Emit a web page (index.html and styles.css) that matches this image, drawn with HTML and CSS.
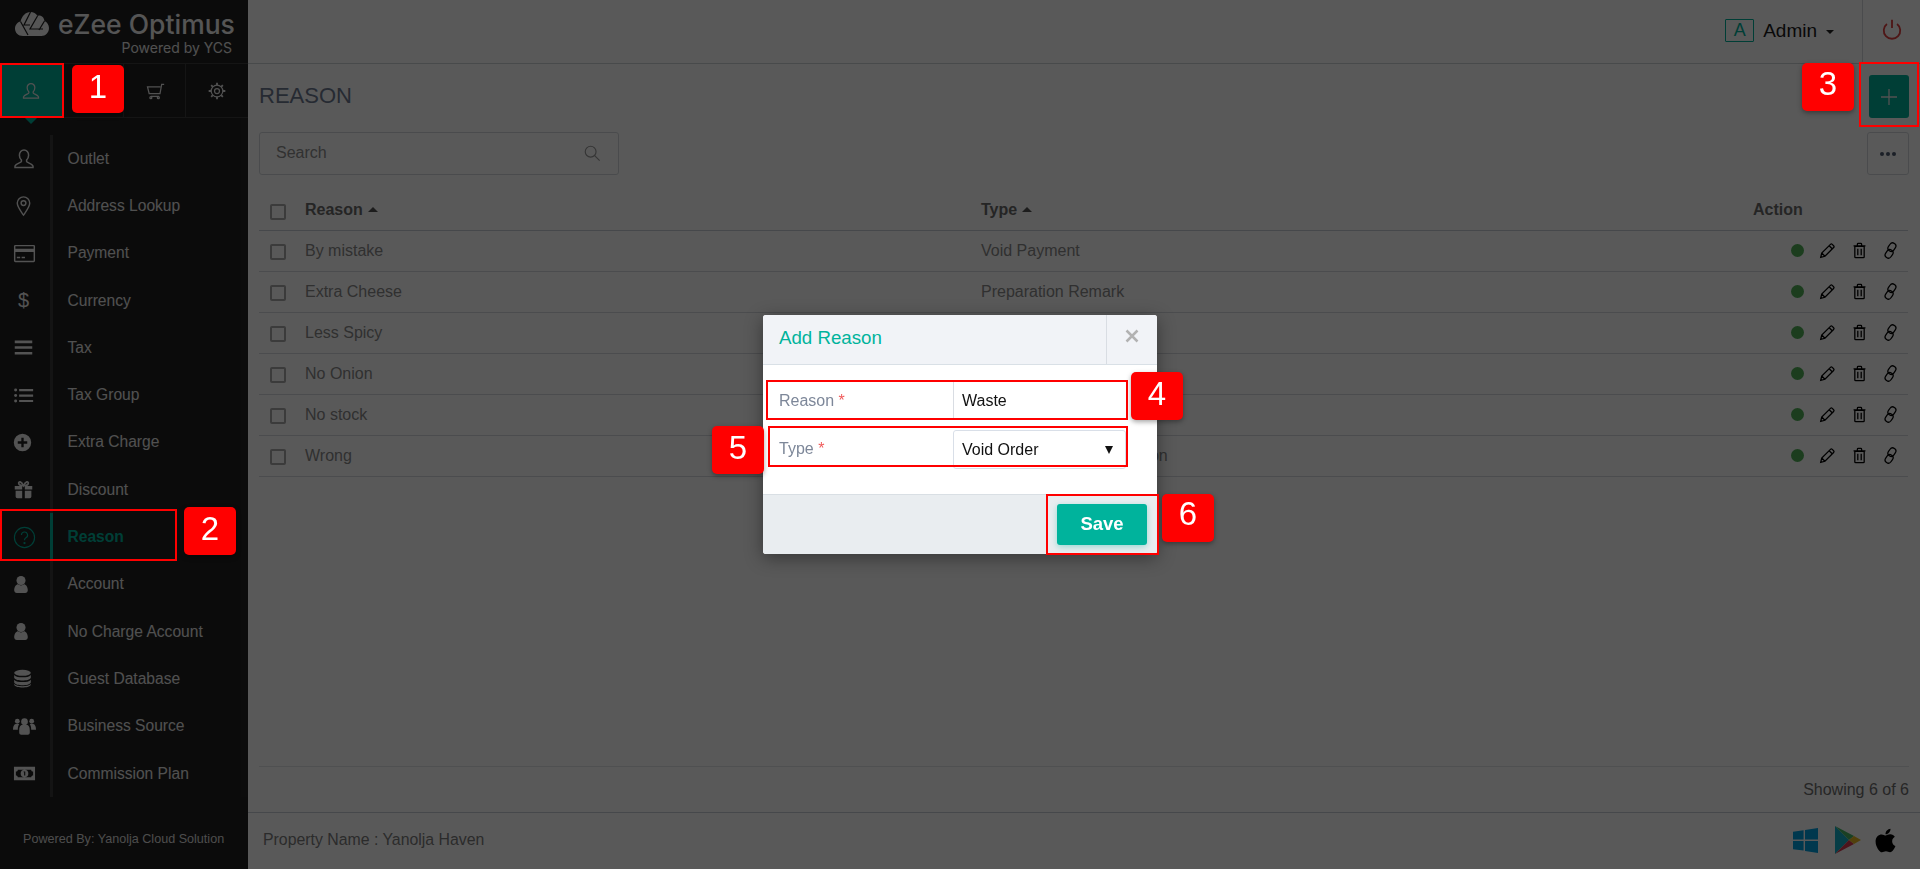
FILE: index.html
```html
<!DOCTYPE html>
<html lang="en">
<head>
<meta charset="utf-8">
<title>Reason</title>
<link rel="stylesheet" href="styles.css">
</head>
<body>
<div class="app">
  <aside class="sidebar">
    <div class="brand">
      <svg class="brand-mark" viewBox="0 0 34 25"><path d="M8 25C3 25 0 21.500 0 17.500C0 14 2.500 11 5.500 10.500C7 5 10.500 1 15.500 1C18.500 1 21 2.500 22.500 5C23.500 4.500 24.500 4.500 25 4.500C27.500 5 29 7 29.500 10C32 11 34 13.800 34 17C34 21.500 30.500 25 26.500 25Z"/><path class="brand-cut" d="M5.500 10.500L13 24M15.500 1L9 14L15 14M22.500 5L15 18H28M29.500 10L24 19"/></svg>
      <div class="brand-text">
        <div class="brand-name">eZee Optimus</div>
        <div class="brand-sub">Powered by YCS</div>
      </div>
    </div>
    <div class="tabs">
      <div class="tab tab-active"><svg class="ico-tab" viewBox="0 0 24 24"><path class="ln" d="M12 3a4.600 5 0 0 1 4.600 5.200c0 2-1 3.800-2 4.800v1.500c0 1 5.600 2 6.400 4.500v1.500H3V19c.8-2.500 6.400-3.500 6.400-4.500V13c-1-1-2-2.800-2-4.800A4.600 5 0 0 1 12 3z"/></svg></div>
      <div class="tab"></div>
      <div class="tab"><svg class="ico-tab" viewBox="0 0 24 24"><path class="ln" d="M23 4h-3l-2 11H5L3 7h15.500M7 18.500h10"/><circle class="ln" cx="7" cy="20" r="1.200"/><circle class="ln" cx="16" cy="20" r="1.200"/></svg></div>
      <div class="tab"><svg class="ico-tab" viewBox="0 0 24 24"><circle class="ln" cx="12" cy="12" r="7"/><circle class="ln" cx="12" cy="12" r="3"/><path class="ln ln-teeth" d="M12 2v3M12 19v3M2 12h3M19 12h3M5 5l2 2M17 17l2 2M19 5l-2 2M7 17l-2 2"/></svg></div>
    </div>
    <nav class="nav">
      <a class="nav-item"><span class="nav-ico ico-lg"><svg viewBox="0 0 24 24"><path class="ln" d="M12 3a4.600 5 0 0 1 4.600 5.200c0 2-1 3.800-2 4.800v1.500c0 1 5.600 2 6.400 4.500v1.500H3V19c.8-2.500 6.400-3.500 6.400-4.500V13c-1-1-2-2.800-2-4.800A4.600 5 0 0 1 12 3z"/></svg></span><span class="nav-label">Outlet</span></a>
      <a class="nav-item"><span class="nav-ico ico-pin"><svg viewBox="0 0 24 24"><path class="ln" d="M12 22C8.500 17 5.500 13.500 5.500 9.500a6.500 6.500 0 0 1 13 0C18.500 13.500 15.500 17 12 22z"/><circle class="ln" cx="12" cy="9.500" r="2.500"/></svg></span><span class="nav-label">Address Lookup</span></a>
      <a class="nav-item"><span class="nav-ico ico-wide"><svg viewBox="0 0 24 24"><path class="sd" fill-rule="evenodd" d="M2.500 3h19A1.500 1.500 0 0 1 23 4.500v15a1.500 1.500 0 0 1-1.500 1.500h-19A1.500 1.500 0 0 1 1 19.500v-15A1.500 1.500 0 0 1 2.500 3zM2.500 4.500V7h19V4.500zM2.500 10.500v9h19v-9zM4 15.500h3.500V17H4zM9 15.500h3.500V17H9z"/></svg></span><span class="nav-label">Payment</span></a>
      <a class="nav-item"><span class="nav-ico nav-glyph">$</span><span class="nav-label">Currency</span></a>
      <a class="nav-item"><span class="nav-ico ico-md"><svg viewBox="0 0 24 24"><path class="sd" d="M2 4h20v3H2zM2 10.500h20v3H2zM2 17h20v3H2z"/></svg></span><span class="nav-label">Tax</span></a>
      <a class="nav-item"><span class="nav-ico ico-md"><svg viewBox="0 0 24 24"><path class="sd" d="M7 4.500h16v2.500H7zM7 10.800h16v2.500H7zM7 17h16v2.500H7z"/><circle class="sd" cx="3" cy="5.700" r="1.700"/><circle class="sd" cx="3" cy="12" r="1.700"/><circle class="sd" cx="3" cy="18.300" r="1.700"/></svg></span><span class="nav-label">Tax Group</span></a>
      <a class="nav-item"><span class="nav-ico"><svg viewBox="0 0 24 24"><path class="sd" fill-rule="evenodd" d="M12 1a11 11 0 1 1 0 22a11 11 0 0 1 0-22zM10.500 6v4.500H6v3h4.500V18h3v-4.500H18v-3h-4.500V6z"/></svg></span><span class="nav-label">Extra Charge</span></a>
      <a class="nav-item"><span class="nav-ico ico-md"><svg viewBox="0 0 24 24"><path class="sd" d="M2 8h8.500v4H2zM13.500 8H22v4h-8.500zM3 13.500h7.500V22H5a2 2 0 0 1-2-2zM13.500 13.500H21V20a2 2 0 0 1-2 2h-5.500z"/><path class="ln ln-bold" d="M12 7.500C9 7.500 6.500 6.500 6.500 4.500C6.500 3 9 2 12 7.500C15 2 17.500 3 17.500 4.500C17.500 6.500 15 7.500 12 7.500z"/></svg></span><span class="nav-label">Discount</span></a>
      <a class="nav-item nav-item-active"><span class="nav-ico ico-help"><svg viewBox="0 0 24 24"><circle class="ln-teal" cx="12" cy="12" r="10.500"/><path class="ln-teal ln-bold" d="M8.800 9.500a3.200 3.200 0 1 1 4.700 2.800c-1 .6-1.500 1.200-1.500 2.500"/><circle class="sd-teal" cx="12" cy="17.800" r="1.200"/></svg></span><span class="nav-label">Reason</span></a>
      <a class="nav-item"><span class="nav-ico ico-slim"><svg viewBox="3 1 18 22.500"><circle class="sd" cx="12" cy="7" r="6"/><path class="sd" d="M3 20c0-5 3-8 5-8c1 1 2.500 1.500 4 1.500s3-.5 4-1.500c2 0 5 3 5 8c0 2-1.500 3.500-3.500 3.500h-11C4.500 23.500 3 22 3 20z"/></svg></span><span class="nav-label">Account</span></a>
      <a class="nav-item"><span class="nav-ico ico-slim"><svg viewBox="3 1 18 22.500"><circle class="sd" cx="12" cy="7" r="6"/><path class="sd" d="M3 20c0-5 3-8 5-8c1 1 2.500 1.500 4 1.500s3-.5 4-1.500c2 0 5 3 5 8c0 2-1.500 3.500-3.500 3.500h-11C4.500 23.500 3 22 3 20z"/></svg></span><span class="nav-label">No Charge Account</span></a>
      <a class="nav-item"><span class="nav-ico"><svg viewBox="0 0 24 24"><ellipse class="sd" cx="12" cy="4.800" rx="10.500" ry="3.800"/><path class="sd" d="M1.500 7.500c2 2.500 6 3 10.500 3s8.500-.5 10.500-3V11c-1 2.500-6 3.500-10.500 3.500S2.500 13.500 1.500 11zM1.500 13.500c2 2.500 6 3 10.500 3s8.500-.5 10.500-3V17c-1 2.500-6 3.500-10.500 3.500S2.500 19.500 1.500 17zM1.500 19c2 2 6 2.700 10.500 2.700s8.500-.7 10.500-2.700v1c-1 2.500-6 3.500-10.500 3.500S2.500 22.500 1.500 20z"/></svg></span><span class="nav-label">Guest Database</span></a>
      <a class="nav-item"><span class="nav-ico ico-wide"><svg viewBox="0 0 24 24"><circle class="sd" cx="12" cy="7" r="3.500"/><circle class="sd" cx="4.500" cy="6.500" r="2.500"/><circle class="sd" cx="19.500" cy="6.500" r="2.500"/><path class="sd" d="M0 15c0-3.500 1.500-5.500 3-5.500h3.500c-.8 1-1.500 3-1.500 6H1.500C.5 15.500 0 15.500 0 15zM24 15c0-3.500-1.500-5.500-3-5.500h-3.500c.8 1 1.500 3 1.500 6h3.500c1 0 1.500 0 1.500-.5zM6.500 16c0-4 1.500-5.500 3-5.500h5c1.500 0 3 1.500 3 5.500v2.500c0 1.200-1 2-2 2h-7c-1 0-2-.8-2-2z"/></svg></span><span class="nav-label">Business Source</span></a>
      <a class="nav-item"><span class="nav-ico ico-wide"><svg viewBox="0 0 24 24"><path class="sd" fill-rule="evenodd" d="M1 5h22v14H1zM5 8c0 1.500-1 2-2 2v4c1 0 2 .5 2 2h14c0-1.500 1-2 2-2v-4c-1 0-2-.5-2-2zM12 8a4 4 0 1 1 0 8a4 4 0 0 1 0-8zM11 10v.8h.6V14h1.200V9.800h-.8z"/></svg></span><span class="nav-label">Commission Plan</span></a>
    </nav>
    <div class="side-foot">Powered By: Yanolja Cloud Solution</div>
  </aside>

  <main class="main">
    <header class="topbar">
      <div class="user"><span class="avatar">A</span><span class="user-name">Admin</span><span class="caret"></span></div>
      <div class="power"><svg viewBox="0 0 24 24"><path class="ln-power" d="M6.500 6.500a9 9 0 1 0 11 0M12 2v9"/></svg></div>
    </header>
    <div class="title-row">
      <h1 class="page-title">REASON</h1>
      <button class="add-btn" type="button"><svg viewBox="0 0 20 20"><path class="ln-plus" d="M10 2v16M2 10h16"/></svg></button>
    </div>
    <div class="tools-row">
      <div class="search"><span class="search-ph">Search</span><svg viewBox="0 0 20 20"><circle class="ln-search" cx="8.500" cy="8.500" r="6"/><path class="ln-search" d="M13 13l5.500 5.500"/></svg></div>
      <button class="more-btn" type="button"><i></i><i></i><i></i></button>
    </div>
    <table class="grid">
      <thead>
        <tr><th class="c-check"><span class="check"></span></th><th class="c-reason">Reason<span class="sort"></span></th><th class="c-type">Type<span class="sort"></span></th><th class="c-action">Action</th></tr>
      </thead>
      <tbody>
        <tr><td class="c-check"><span class="check"></span></td><td>By mistake</td><td>Void Payment</td><td><div class="acts"><span class="dot"></span><svg viewBox="0 0 20 20"><path class="ln-act" d="M2 18l1.200-5L13.500 2.800a1.500 1.500 0 0 1 2.100 0l1.600 1.600a1.500 1.500 0 0 1 0 2.100L7 16.800zM3.200 13l3.800 3.800M12 4.500l3.500 3.500"/></svg><svg viewBox="0 0 20 20"><path class="ln-act" d="M4.500 5h11v12.500a1 1 0 0 1-1 1h-9a1 1 0 0 1-1-1zM3 4.500h14M7.500 4V2.500a1 1 0 0 1 1-1h3a1 1 0 0 1 1 1V4M8 8v7.500M12 8v7.500"/></svg><svg viewBox="0 0 20 20"><rect class="ln-act" x="8" y="1" width="7.500" height="10.500" rx="3.700" transform="rotate(35 12 6)"/><rect class="ln-act" x="4.500" y="8.500" width="7.500" height="10.500" rx="3.700" transform="rotate(35 8 14)"/></svg></div></td></tr>
        <tr><td class="c-check"><span class="check"></span></td><td>Extra Cheese</td><td>Preparation Remark</td><td><div class="acts"><span class="dot"></span><svg viewBox="0 0 20 20"><path class="ln-act" d="M2 18l1.200-5L13.500 2.800a1.500 1.500 0 0 1 2.100 0l1.600 1.600a1.500 1.500 0 0 1 0 2.100L7 16.800zM3.200 13l3.800 3.800M12 4.500l3.500 3.500"/></svg><svg viewBox="0 0 20 20"><path class="ln-act" d="M4.500 5h11v12.500a1 1 0 0 1-1 1h-9a1 1 0 0 1-1-1zM3 4.500h14M7.500 4V2.500a1 1 0 0 1 1-1h3a1 1 0 0 1 1 1V4M8 8v7.500M12 8v7.500"/></svg><svg viewBox="0 0 20 20"><rect class="ln-act" x="8" y="1" width="7.500" height="10.500" rx="3.700" transform="rotate(35 12 6)"/><rect class="ln-act" x="4.500" y="8.500" width="7.500" height="10.500" rx="3.700" transform="rotate(35 8 14)"/></svg></div></td></tr>
        <tr><td class="c-check"><span class="check"></span></td><td>Less Spicy</td><td>Preparation Remark</td><td><div class="acts"><span class="dot"></span><svg viewBox="0 0 20 20"><path class="ln-act" d="M2 18l1.200-5L13.500 2.800a1.500 1.500 0 0 1 2.100 0l1.600 1.600a1.500 1.500 0 0 1 0 2.100L7 16.800zM3.200 13l3.800 3.800M12 4.500l3.500 3.500"/></svg><svg viewBox="0 0 20 20"><path class="ln-act" d="M4.500 5h11v12.500a1 1 0 0 1-1 1h-9a1 1 0 0 1-1-1zM3 4.500h14M7.500 4V2.500a1 1 0 0 1 1-1h3a1 1 0 0 1 1 1V4M8 8v7.500M12 8v7.500"/></svg><svg viewBox="0 0 20 20"><rect class="ln-act" x="8" y="1" width="7.500" height="10.500" rx="3.700" transform="rotate(35 12 6)"/><rect class="ln-act" x="4.500" y="8.500" width="7.500" height="10.500" rx="3.700" transform="rotate(35 8 14)"/></svg></div></td></tr>
        <tr><td class="c-check"><span class="check"></span></td><td>No Onion</td><td>Preparation Remark</td><td><div class="acts"><span class="dot"></span><svg viewBox="0 0 20 20"><path class="ln-act" d="M2 18l1.200-5L13.500 2.800a1.500 1.500 0 0 1 2.100 0l1.600 1.600a1.500 1.500 0 0 1 0 2.100L7 16.800zM3.200 13l3.800 3.800M12 4.500l3.500 3.500"/></svg><svg viewBox="0 0 20 20"><path class="ln-act" d="M4.500 5h11v12.500a1 1 0 0 1-1 1h-9a1 1 0 0 1-1-1zM3 4.500h14M7.500 4V2.500a1 1 0 0 1 1-1h3a1 1 0 0 1 1 1V4M8 8v7.500M12 8v7.500"/></svg><svg viewBox="0 0 20 20"><rect class="ln-act" x="8" y="1" width="7.500" height="10.500" rx="3.700" transform="rotate(35 12 6)"/><rect class="ln-act" x="4.500" y="8.500" width="7.500" height="10.500" rx="3.700" transform="rotate(35 8 14)"/></svg></div></td></tr>
        <tr><td class="c-check"><span class="check"></span></td><td>No stock</td><td>Void Order</td><td><div class="acts"><span class="dot"></span><svg viewBox="0 0 20 20"><path class="ln-act" d="M2 18l1.200-5L13.500 2.800a1.500 1.500 0 0 1 2.100 0l1.600 1.600a1.500 1.500 0 0 1 0 2.100L7 16.800zM3.200 13l3.800 3.800M12 4.500l3.500 3.500"/></svg><svg viewBox="0 0 20 20"><path class="ln-act" d="M4.500 5h11v12.500a1 1 0 0 1-1 1h-9a1 1 0 0 1-1-1zM3 4.500h14M7.500 4V2.500a1 1 0 0 1 1-1h3a1 1 0 0 1 1 1V4M8 8v7.500M12 8v7.500"/></svg><svg viewBox="0 0 20 20"><rect class="ln-act" x="8" y="1" width="7.500" height="10.500" rx="3.700" transform="rotate(35 12 6)"/><rect class="ln-act" x="4.500" y="8.500" width="7.500" height="10.500" rx="3.700" transform="rotate(35 8 14)"/></svg></div></td></tr>
        <tr><td class="c-check"><span class="check"></span></td><td>Wrong</td><td>Complimentary Remission</td><td><div class="acts"><span class="dot"></span><svg viewBox="0 0 20 20"><path class="ln-act" d="M2 18l1.200-5L13.500 2.800a1.500 1.500 0 0 1 2.100 0l1.600 1.600a1.500 1.500 0 0 1 0 2.100L7 16.800zM3.200 13l3.800 3.800M12 4.500l3.500 3.500"/></svg><svg viewBox="0 0 20 20"><path class="ln-act" d="M4.500 5h11v12.500a1 1 0 0 1-1 1h-9a1 1 0 0 1-1-1zM3 4.500h14M7.500 4V2.500a1 1 0 0 1 1-1h3a1 1 0 0 1 1 1V4M8 8v7.500M12 8v7.500"/></svg><svg viewBox="0 0 20 20"><rect class="ln-act" x="8" y="1" width="7.500" height="10.500" rx="3.700" transform="rotate(35 12 6)"/><rect class="ln-act" x="4.500" y="8.500" width="7.500" height="10.500" rx="3.700" transform="rotate(35 8 14)"/></svg></div></td></tr>
      </tbody>
    </table>
    <div class="grid-foot">Showing 6 of 6</div>
    <footer class="page-foot">
      <span class="property">Property Name : Yanolja Haven</span>
      <div class="stores">
        <svg class="store-win" viewBox="0 0 26 26"><path class="win" d="M0 4l11-1.600V12H0zM12.500 2.200L26 0v12H12.500zM0 13.500h11v10L0 22zM12.500 13.500H26V26l-13.500-2z"/></svg>
        <svg class="store-play" viewBox="0 0 26 28"><path class="play-a" d="M0 0L14 14L0 28z"/><path class="play-b" d="M0 0L19 10L14 14z"/><path class="play-c" d="M0 28L19 18L14 14z"/><path class="play-d" d="M19 10L26 14L19 18L14 14z"/></svg>
        <svg class="store-apple" viewBox="0 0 384 512"><path d="M318.700 268.700c-.2-36.700 16.400-64.400 50-84.800-18.800-26.900-47.200-41.700-84.700-44.600-35.500-2.800-74.300 20.700-88.500 20.700-15 0-49.400-19.700-76.400-19.700C63.300 141.200 4 184.800 4 273.500q0 39.300 14.400 81.200c12.800 36.700 59 126.700 107.200 125.200 25.200-.6 43-17.900 75.800-17.900 31.800 0 48.300 17.900 76.400 17.900 48.600-.7 90.400-82.500 102.600-119.300-65.200-30.700-61.700-90-61.700-91.900zm-56.600-164.200c27.300-32.400 24.800-61.900 24-72.500-24.100 1.400-52 16.400-67.900 34.900-17.500 19.800-27.800 44.300-25.600 71.900 26.100 2 49.900-11.400 69.500-34.300z"/></svg>
      </div>
    </footer>
  </main>
</div>

<div class="backdrop"></div>

<section class="modal">
  <div class="modal-head">
    <h2 class="modal-title">Add Reason</h2>
    <div class="modal-close"><svg viewBox="0 0 14 14"><path class="ln-close" d="M1.500 1.500l11 11M12.500 1.500l-11 11"/></svg></div>
  </div>
  <div class="modal-body">
    <div class="field"><label class="field-label">Reason <span class="req">*</span></label><input class="field-input" type="text" value="Waste"></div>
    <div class="field field-select"><label class="field-label field-label-up">Type <span class="req">*</span></label><div class="select">Void Order<span class="select-arrow"></span></div></div>
  </div>
  <div class="modal-foot"><button class="save-btn" type="button">Save</button></div>
</section>

<div class="mark mark-1"></div>
<div class="mark mark-2"></div>
<div class="mark mark-3"></div>
<div class="mark mark-4"></div>
<div class="mark mark-5"></div>
<div class="mark mark-6"></div>
<div class="badge badge-1">1</div>
<div class="badge badge-2">2</div>
<div class="badge badge-3">3</div>
<div class="badge badge-4">4</div>
<div class="badge badge-5">5</div>
<div class="badge badge-6">6</div>
</body>
</html>
```

FILE: styles.css
```css
* { box-sizing: border-box; }
html, body { margin: 0; height: 100%; overflow: hidden; }
body { font-family: "Liberation Sans", Arial, sans-serif; font-size: 16px; color: #7c7c7c; background: #fff; }

.app { display: flex; width: 1920px; height: 869px; }

/* sidebar */
.sidebar { width: 248px; flex: none; display: flex; flex-direction: column; background: #202020; color: #e8e8e8; }
.brand { height: 64px; flex: none; display: flex; gap: 9px; padding: 9px 16px 0 15px; border-bottom: 1px solid #3d3d3d; }
.brand-mark { width: 34px; height: 25px; flex: none; margin-top: 2px; fill: #f2f2f2; }
.brand-cut { fill: none; stroke: #202020; stroke-width: 1.200; }
.brand-text { flex: 1; min-width: 0; text-align: right; }
.brand-name { font-family: Inter, sans-serif; font-size: 26.500px; font-weight: 500; line-height: 30px; color: #f2f2f2; white-space: nowrap; }
.brand-sub { font-family: Inter, sans-serif; font-size: 14px; line-height: 17px; color: #e6e6e6; white-space: nowrap; }

.tabs { height: 54px; flex: none; display: flex; border-bottom: 1px solid #3d3d3d; }
.tab { width: 62px; display: flex; align-items: center; justify-content: center; border-right: 1px solid #3d3d3d; position: relative; }
.tab:last-child { border-right: 0; }
.tab-active { background: #00b39c; border-right: 0; }
.tab-active::after { content: ""; position: absolute; left: 24px; top: 100%; border: 7px solid transparent; border-top-color: #00b39c; border-bottom: 0; }
.ico-tab { width: 20px; height: 20px; }
.ln { fill: none; stroke: #e8e8e8; stroke-width: 1.500; }
.ln-bold { stroke-width: 2; }
.ln-teeth { stroke-width: 2.200; }
.sd { fill: #eeeeee; }

.nav { flex: 1; padding-top: 17px; border-right: 7px solid #242424; }
.nav-item { display: flex; height: 47.300px; align-items: center; }
.nav-ico { width: 50px; height: 100%; flex: none; display: flex; align-items: center; padding-left: 13px; }
.nav-ico svg { width: 19px; height: 19px; }
.ico-md svg { width: 21px; height: 21px; }
.ico-lg { padding-left: 12px; }
.ico-lg svg { width: 24px; height: 24px; }
.ico-pin { padding-left: 12px; }
.ico-pin svg { width: 23px; height: 23px; }
.ico-wide svg { width: 23px; height: 23px; }
.ico-slim { padding-left: 14px; }
.ico-slim svg { width: 14px; height: 17px; }
.ico-help svg { width: 23px; height: 23px; }
.nav-glyph { font-size: 20px; padding-left: 18px; color: #eeeeee; }
.nav-label { flex: 1; height: 100%; display: flex; align-items: center; padding-left: 14.500px; border-left: 3px solid #3a3a3a; font-size: 15.600px; color: #e6e6e6; }
.nav-item-active .nav-label { color: #00b39c; font-weight: 700; border-left-color: #00b39c; }
.ln-teal { fill: none; stroke: #00b39c; stroke-width: 1.200; }
.sd-teal { fill: #00b39c; }

.side-foot { height: 72px; flex: none; display: flex; align-items: center; padding: 12px 0 0 23px; font-size: 12.600px; color: #dcdcdc; white-space: nowrap; }

/* main */
.main { flex: 1; min-width: 0; display: flex; flex-direction: column; background: #fff; }
.topbar { height: 64px; flex: none; display: flex; justify-content: flex-end; border-bottom: 1px solid #cfd3d8; }
.user { display: flex; align-items: center; padding: 0 28px 2px 0; }
.avatar { width: 29px; height: 23px; display: flex; align-items: center; justify-content: center; border: 1px solid #00b39c; border-radius: 1px; color: #00b39c; font-size: 18px; margin-right: 9px; }
.user-name { font-size: 19px; color: #1a1a1a; }
.caret { margin-left: 9px; margin-top: 2px; border: 4.500px solid transparent; border-top-color: #222; border-bottom: 0; }
.power { width: 58px; display: flex; align-items: center; justify-content: center; border-left: 1px solid #d5d8dc; padding-bottom: 6px; }
.power svg { width: 22px; height: 22px; }
.ln-power { fill: none; stroke: #e04040; stroke-width: 2; }

.title-row { height: 68px; flex: none; display: flex; align-items: center; justify-content: space-between; padding: 0 11px; }
.page-title { margin: 0; font-size: 22px; font-weight: 400; color: #6d7a91; padding-bottom: 4px; }
.add-btn { width: 40px; height: 43px; border: 0; border-radius: 3px; background: #00b39c; display: flex; align-items: center; justify-content: center; padding: 0; align-self: flex-start; margin-top: 11px; }
.add-btn svg { width: 20px; height: 20px; }
.ln-plus { fill: none; stroke: #e8e8e8; stroke-width: 1.300; }

.tools-row { height: 43px; flex: none; display: flex; justify-content: space-between; padding: 0 11px; }
.search { width: 360px; height: 43px; display: flex; align-items: center; justify-content: space-between; padding: 0 17px 2px 16px; border: 1px solid #d5d8dc; border-radius: 3px; }
.search svg { width: 18px; height: 18px; }
.ln-search { fill: none; stroke: #9a9a9a; stroke-width: 1.300; }
.search-ph { color: #8d8d8d; }
.more-btn { width: 42px; height: 43px; border: 1px solid #d5d8dc; border-radius: 3px; background: #fff; display: flex; align-items: center; justify-content: center; gap: 2px; padding: 0; }
.more-btn i { width: 4px; height: 4px; border-radius: 50%; background: #4d5a70; }

.grid { width: 1649px; margin: 14px 0 0 11px; border-collapse: collapse; table-layout: fixed; }
.grid th { height: 41px; padding: 2px 0 0; font-weight: 700; text-align: left; color: #6a6a6a; border-bottom: 1px solid #c9ced6; }
.grid td { height: 41px; padding: 0; border-bottom: 1px solid #d8dbdf; color: #8a8a8a; white-space: nowrap; }
.c-check { width: 46px; padding-left: 11px !important; }
.c-reason { width: 676px; }
.c-type { width: 772px; }
.check { display: block; width: 16px; height: 16px; border: 2px solid #a8a8a8; border-radius: 2px; margin-top: 3px; }
.sort { display: inline-block; margin-left: 5px; vertical-align: 3px; border: 5px solid transparent; border-bottom-color: #555; border-top: 0; }
.acts { display: flex; justify-content: flex-end; align-items: center; gap: 14.500px; padding-right: 9px; }
.acts svg { width: 17px; height: 17px; }
.dot { width: 13px; height: 13px; border-radius: 50%; background: #50b058; margin-right: 1px; }
.ln-act { fill: none; stroke: #000; stroke-width: 1.500; }

.grid-foot { margin: auto 11px 0; height: 46px; flex: none; display: flex; align-items: center; justify-content: flex-end; border-top: 1px solid #e2e4e7; color: #6e6e6e; }
.page-foot { height: 57px; flex: none; display: flex; align-items: center; justify-content: space-between; padding: 0 24px 2px 15px; border-top: 1px solid #c9ced6; }
.property { font-size: 15.850px; color: #7c7c7c; }
.stores { display: flex; align-items: center; }
.store-win { width: 25px; height: 25px; margin-right: 17px; }
.win { fill: #00a0e0; }
.store-play { width: 26px; height: 28px; margin-right: 14px; }
.play-a { fill: #12b0c8; }
.play-b { fill: #48b866; }
.play-c { fill: #d93a50; }
.play-d { fill: #e8b820; }
.store-apple { width: 21px; height: 27px; fill: #000; }

/* overlay layer */
.backdrop { position: fixed; inset: 0; background: rgba(0, 0, 0, .65); }

.modal { position: absolute; left: 763px; top: 315px; width: 394px; height: 239px; display: flex; flex-direction: column; background: #fff; border-radius: 3px; overflow: hidden; box-shadow: 0 4px 18px rgba(0, 0, 0, .4); }
.modal-head { height: 50px; flex: none; display: flex; justify-content: space-between; background: #f1f3f7; border-bottom: 1px solid #d9e0e6; }
.modal-title { margin: 0; font-size: 18.700px; font-weight: 400; line-height: 46px; padding-left: 16px; color: #00b39c; }
.modal-close { width: 51px; display: flex; align-items: center; justify-content: center; padding-bottom: 7px; border-left: 1px solid #d9dde3; }
.modal-close svg { width: 14px; height: 14px; }
.ln-close { fill: none; stroke: #b2b2b2; stroke-width: 2.500; }
.modal-body { flex: 1; padding: 17px 31px 0 16px; display: flex; flex-direction: column; gap: 10px; }
.field { display: flex; align-items: center; height: 38px; }
.field-select { height: 39px; }
.field-label { width: 174px; flex: none; color: #7d8799; }
.field-label-up { padding-bottom: 2px; }
.req { color: #f05a5a; }
.field-input { flex: 1; min-width: 0; height: 100%; border: 0; border-left: 1px solid #d9dde3; padding: 0 8px; font: inherit; color: #111; background: #fff; }
.select { flex: 1; height: 100%; display: flex; align-items: center; justify-content: space-between; padding: 0 12px 0 8px; border: 1px solid #d9dfe8; border-radius: 3px; color: #111; }
.select-arrow { border: 4.500px solid transparent; border-top: 8px solid #111; border-bottom: 0; }
.modal-foot { height: 60px; flex: none; display: flex; justify-content: flex-end; align-items: flex-start; padding: 9px 10px 0 0; background: #e9edf0; border-top: 1px solid #d9dfe4; }
.save-btn { width: 90px; height: 41px; padding: 0 0 2px; border: 0; border-radius: 3px; background: #00b39c; color: #fff; font: 700 18.500px "Liberation Sans", Arial, sans-serif; box-shadow: 0 2px 6px rgba(0, 179, 156, .35); }

.mark { position: absolute; border: 2px solid #f00; }
.mark-1 { left: 0; top: 63px; width: 64px; height: 55px; }
.mark-2 { left: 0; top: 509px; width: 177px; height: 52px; }
.mark-3 { left: 1859px; top: 62px; width: 60px; height: 65px; }
.mark-4 { left: 766px; top: 380px; width: 362px; height: 40px; }
.mark-5 { left: 768px; top: 426px; width: 360px; height: 41px; }
.mark-6 { left: 1046px; top: 494px; width: 113px; height: 61px; }

.badge { position: absolute; width: 52px; height: 48px; display: flex; align-items: center; justify-content: center; padding-bottom: 4px; background: #f00; border-radius: 5px; color: #fff; font-size: 33px; box-shadow: 0 2px 5px rgba(0, 0, 0, .35); }
.badge-1 { left: 72px; top: 65px; }
.badge-2 { left: 184px; top: 507px; }
.badge-3 { left: 1802px; top: 63px; padding-bottom: 6px; }
.badge-4 { left: 1131px; top: 372px; }
.badge-5 { left: 712px; top: 426px; }
.badge-6 { left: 1162px; top: 494px; padding-bottom: 8px; }
```
